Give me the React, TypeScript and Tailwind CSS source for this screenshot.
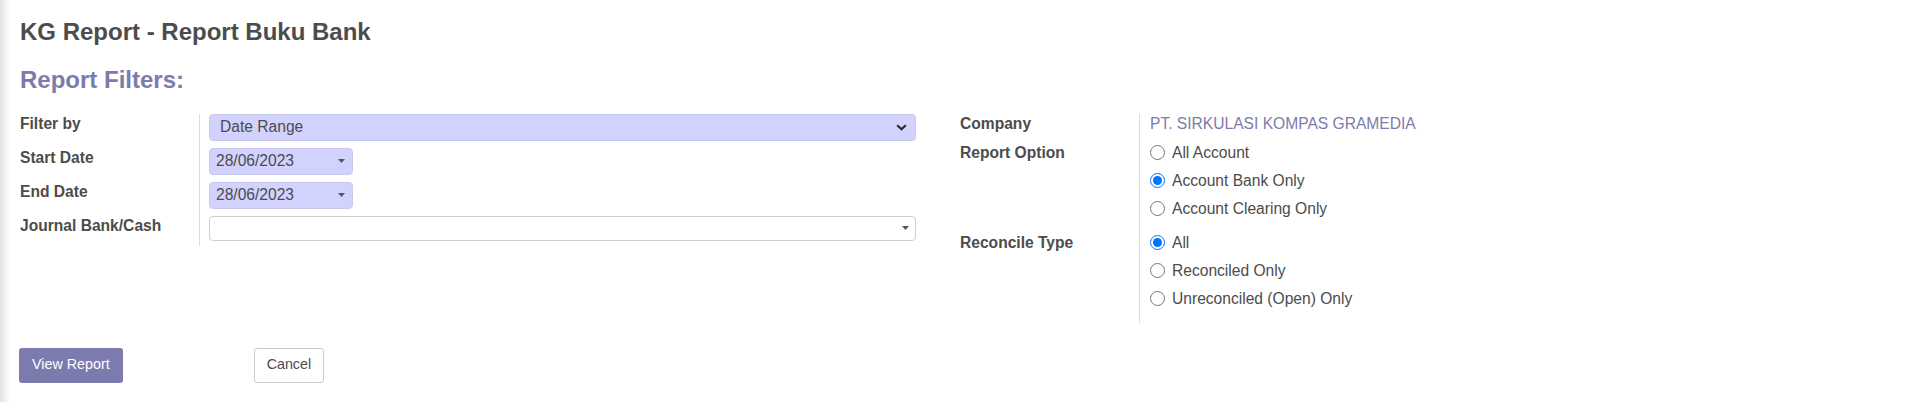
import { type ReactNode } from "react";

const label = "text-[15.6px] font-bold leading-[20px] text-[#4c4c4c]";

function Chevron() {
  return (
    <svg width="11" height="7" viewBox="0 0 11 7" className="shrink-0">
      <polyline points="1.2,1.2 5.5,5.3 9.8,1.2" fill="none" stroke="#2b2b2b" strokeWidth="2.2" />
    </svg>
  );
}

function Caret() {
  return (
    <svg width="7" height="4" viewBox="0 0 7 4" className="shrink-0">
      <polygon points="0,0 7,0 3.5,4" fill="#555" />
    </svg>
  );
}

function Field({ children, className }: { children: ReactNode; className: string }) {
  return <div className={"flex items-center rounded-[4px] border text-[15.6px] " + className}>{children}</div>;
}

function Radio({ name, text, checked }: { name: string; text: string; checked?: boolean }) {
  return (
    <label className="flex h-[28px] items-center gap-[7px] text-[15.6px] text-[#4c4c4c]">
      <input type="radio" name={name} defaultChecked={checked} className="h-[15px] w-[15px]" />
      <span>{text}</span>
    </label>
  );
}

export default function App() {
  return (
    <div className="flex min-h-[402px] bg-white font-['Liberation_Sans','Arial',sans-serif] text-[#4c4c4c]">
      <div className="w-[10px] shrink-0 bg-linear-to-r from-[#e2e2e2] to-white" />
      <div className="flex-1 pl-[10px] pt-[18px]">
        <h1 className="text-[24px] font-bold leading-[28.8px] text-[#4c4c4c]">KG Report - Report Buku Bank</h1>
        <h2 className="mt-[19px] text-[24px] font-bold leading-[28.8px] text-[#7c7bad]">Report Filters:</h2>

        <div className="mt-[19px] flex items-start">
          {/* left group */}
          <div className="w-[940px]">
            <div className="grid w-[896px] grid-cols-[180px_716px]">
              <div className="border-r border-[#dcdcdc] pb-[7px]">
                <p className={label}>Filter by</p>
              </div>
              <div className="pb-[7px] pl-[9px]">
                <Field className="h-[27px] justify-between border-[#c9c9ee] bg-[#d2d2ff] pl-[10px] pr-[8px]">
                  <span>Date Range</span>
                  <Chevron />
                </Field>
              </div>

              <div className="border-r border-[#dcdcdc] pb-[7px]">
                <p className={label}>Start Date</p>
              </div>
              <div className="pb-[7px] pl-[9px]">
                <Field className="h-[27px] w-[144px] justify-between border-[#c9c9ee] bg-[#d2d2ff] pl-[6px] pr-[7px]">
                  <span>28/06/2023</span>
                  <Caret />
                </Field>
              </div>

              <div className="border-r border-[#dcdcdc] pb-[7px]">
                <p className={label}>End Date</p>
              </div>
              <div className="pb-[7px] pl-[9px]">
                <Field className="h-[27px] w-[144px] justify-between border-[#c9c9ee] bg-[#d2d2ff] pl-[6px] pr-[7px]">
                  <span>28/06/2023</span>
                  <Caret />
                </Field>
              </div>

              <div className="border-r border-[#dcdcdc] pb-[5px]">
                <p className={label}>Journal Bank/Cash</p>
              </div>
              <div className="pb-[5px] pl-[9px]">
                <Field className="h-[25px] justify-end border-[#cfcfcf] bg-white pr-[6px]">
                  <Caret />
                </Field>
              </div>
            </div>
          </div>

          {/* right group */}
          <div className="grid grid-cols-[180px_400px]">
            <div className="h-[25px] border-r border-[#dcdcdc]">
              <p className={label}>Company</p>
            </div>
            <div className="h-[25px] pl-[10px]">
              <p className="text-[15.6px] leading-[20px] text-[#7c7bad]">PT. SIRKULASI KOMPAS GRAMEDIA</p>
            </div>

            <div className="border-r border-[#dcdcdc]">
              <p className="text-[15.6px] font-bold leading-[28px]">Report Option</p>
            </div>
            <div className="pl-[10px]">
              <Radio name="option" text="All Account" />
              <Radio name="option" text="Account Bank Only" checked />
              <Radio name="option" text="Account Clearing Only" />
            </div>

            <div className="border-r border-[#dcdcdc] pb-[10px] pt-[6px]">
              <p className="text-[15.6px] font-bold leading-[28px]">Reconcile Type</p>
            </div>
            <div className="pb-[10px] pl-[10px] pt-[6px]">
              <Radio name="reconcile" text="All" checked />
              <Radio name="reconcile" text="Reconciled Only" />
              <Radio name="reconcile" text="Unreconciled (Open) Only" />
            </div>
          </div>
        </div>

        <div className="-ml-px mt-[25px] flex items-center">
          <button className="h-[35px] rounded-[3px] bg-[#7c7bad] px-[13px] text-[14.3px] text-white">View Report</button>
          <button className="ml-[131px] h-[35px] rounded-[3px] border border-[#cccccc] bg-white px-[12px] text-[14.3px] text-[#4c4c4c]">
            Cancel
          </button>
        </div>
      </div>
    </div>
  );
}
